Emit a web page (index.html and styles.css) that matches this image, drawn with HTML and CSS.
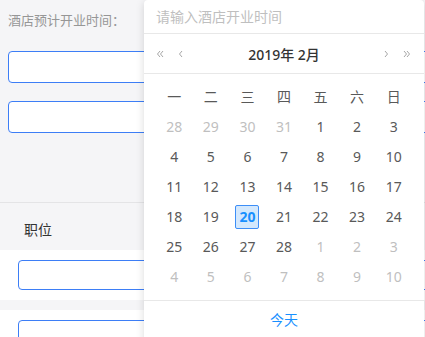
FILE: index.html
```html
<!DOCTYPE html>
<html lang="zh-CN">
<head>
    <meta charset="UTF-8">
    <meta name="viewport" content="width=device-width, initial-scale=1.0">
    <title>酒店信息</title>
    <link rel="stylesheet" href="styles.css">
</head>
<body>
    <div class="page">
        <div class="field-block">
            <div class="field-label">酒店预计开业时间：</div>
            <div class="input-box"></div>
            <div class="input-box second"></div>
        </div>
        <div class="job-block">
            <div class="job-title">职位</div>
            <div class="job-row"><div class="input-box small"></div></div>
            <div class="job-gap"></div>
            <div class="job-row"><div class="input-box small"></div></div>
        </div>
    </div>

    <!-- date picker dropdown -->
    <div class="picker">
        <div class="picker-input">请输入酒店开业时间</div>
        <div class="picker-header">
            <div class="nav nav-left">
                <span class="nav-btn">
                    <svg width="8" height="8" viewBox="0 0 8 8"><path d="M4 1 L1.5 4 L4 7 M7 1 L4.5 4 L7 7" fill="none" stroke="#a6a6a6" stroke-width="1"/></svg>
                </span>
                <span class="nav-btn">
                    <svg width="5" height="8" viewBox="0 0 5 8"><path d="M4 1 L1.5 4 L4 7" fill="none" stroke="#a6a6a6" stroke-width="1"/></svg>
                </span>
            </div>
            <div class="picker-title">2019年 2月</div>
            <div class="nav nav-right">
                <span class="nav-btn">
                    <svg width="5" height="8" viewBox="0 0 5 8"><path d="M1 1 L3.5 4 L1 7" fill="none" stroke="#a6a6a6" stroke-width="1"/></svg>
                </span>
                <span class="nav-btn">
                    <svg width="8" height="8" viewBox="0 0 8 8"><path d="M1 1 L3.5 4 L1 7 M4 1 L6.5 4 L4 7" fill="none" stroke="#a6a6a6" stroke-width="1"/></svg>
                </span>
            </div>
        </div>
        <div class="picker-body">
            <table class="calendar">
                <thead>
                    <tr><th>一</th><th>二</th><th>三</th><th>四</th><th>五</th><th>六</th><th>日</th></tr>
                </thead>
                <tbody>
                    <tr><td class="other"><span>28</span></td><td class="other"><span>29</span></td><td class="other"><span>30</span></td><td class="other"><span>31</span></td><td><span>1</span></td><td><span>2</span></td><td><span>3</span></td></tr>
                    <tr><td><span>4</span></td><td><span>5</span></td><td><span>6</span></td><td><span>7</span></td><td><span>8</span></td><td><span>9</span></td><td><span>10</span></td></tr>
                    <tr><td><span>11</span></td><td><span>12</span></td><td><span>13</span></td><td><span>14</span></td><td><span>15</span></td><td><span>16</span></td><td><span>17</span></td></tr>
                    <tr><td><span>18</span></td><td><span>19</span></td><td class="today"><span>20</span></td><td><span>21</span></td><td><span>22</span></td><td><span>23</span></td><td><span>24</span></td></tr>
                    <tr><td><span>25</span></td><td><span>26</span></td><td><span>27</span></td><td><span>28</span></td><td class="other"><span>1</span></td><td class="other"><span>2</span></td><td class="other"><span>3</span></td></tr>
                    <tr><td class="other"><span>4</span></td><td class="other"><span>5</span></td><td class="other"><span>6</span></td><td class="other"><span>7</span></td><td class="other"><span>8</span></td><td class="other"><span>9</span></td><td class="other"><span>10</span></td></tr>
                </tbody>
            </table>
        </div>
        <div class="picker-footer">
            <a class="today-link">今天</a>
        </div>
    </div>
</body>
</html>
```

FILE: styles.css
```css
html, body {
    margin: 0;
    padding: 0;
}
body {
    font-family: "Noto Sans", "Noto Sans CJK SC", sans-serif;
    background-color: #f5f5f7;
    width: 425px;
    height: 337px;
    overflow: hidden;
    position: relative;
}
.page {
    width: 100%;
}
.field-block {
    padding: 10px 0 69px 8px;
}
.field-label {
    font-size: 13px;
    line-height: 20px;
    color: #969696;
}
.input-box {
    height: 32px;
    box-sizing: border-box;
    margin-top: 21px;
    margin-right: -10px;
    background-color: #fff;
    border: 1px solid #3d7ef6;
    border-radius: 4px;
}
.input-box.second {
    margin-top: 18px;
}
.input-box.small {
    height: 30px;
    margin: 0 -10px 0 18px;
}
.job-block {
    border-top: 1px solid #e4e4e6;
}
.job-title {
    padding: 16px 0 9px 24px;
    font-size: 14px;
    line-height: 22px;
    color: #333;
}
.job-row {
    background-color: #fff;
    padding: 10px 0;
}
.job-gap {
    height: 10px;
}

.picker {
    position: absolute;
    left: 144px;
    top: 0;
    width: 280px;
    height: 345px;
    background-color: #fff;
    border-radius: 4px;
    box-shadow: 0 2px 8px rgba(0, 0, 0, 0.15);
    font-size: 14px;
    color: #595959;
}
.picker-input {
    height: 34px;
    box-sizing: border-box;
    padding: 0 12px;
    line-height: 34px;
    color: #bfbfbf;
    border-bottom: 1px solid #e8e8e8;
}
.picker-header {
    height: 40px;
    box-sizing: border-box;
    display: grid;
    grid-template-columns: 1fr auto 1fr;
    align-items: center;
    border-bottom: 1px solid #e8e8e8;
}
.picker-title {
    font-weight: 500;
    color: #333;
}
.nav {
    display: flex;
    align-items: center;
    gap: 14px;
}
.nav-left {
    padding-left: 12px;
}
.nav-right {
    justify-content: flex-end;
    padding-right: 13px;
}
.nav-btn {
    display: flex;
}
.picker-body {
    padding: 8px 12px;
    border-bottom: 1px solid #e8e8e8;
}
.calendar {
    width: 100%;
    border-collapse: collapse;
    table-layout: fixed;
}
.calendar th {
    font-weight: normal;
    line-height: 18px;
    padding: 6px 0;
    color: #595959;
}
.calendar td {
    padding: 3px 0;
    text-align: center;
}
.calendar td span {
    display: block;
    width: 24px;
    height: 24px;
    box-sizing: border-box;
    margin: 0 auto;
    line-height: 22px;
    border: 1px solid transparent;
    border-radius: 2px;
}
.calendar td.other {
    color: #bfbfbf;
}
.calendar td.today span {
    background-color: #d3e8fd;
    border-color: #3d8ef7;
    color: #1890ff;
    font-weight: bold;
}
.picker-footer {
    line-height: 38px;
    text-align: center;
}
.today-link {
    color: #1890ff;
}
```
